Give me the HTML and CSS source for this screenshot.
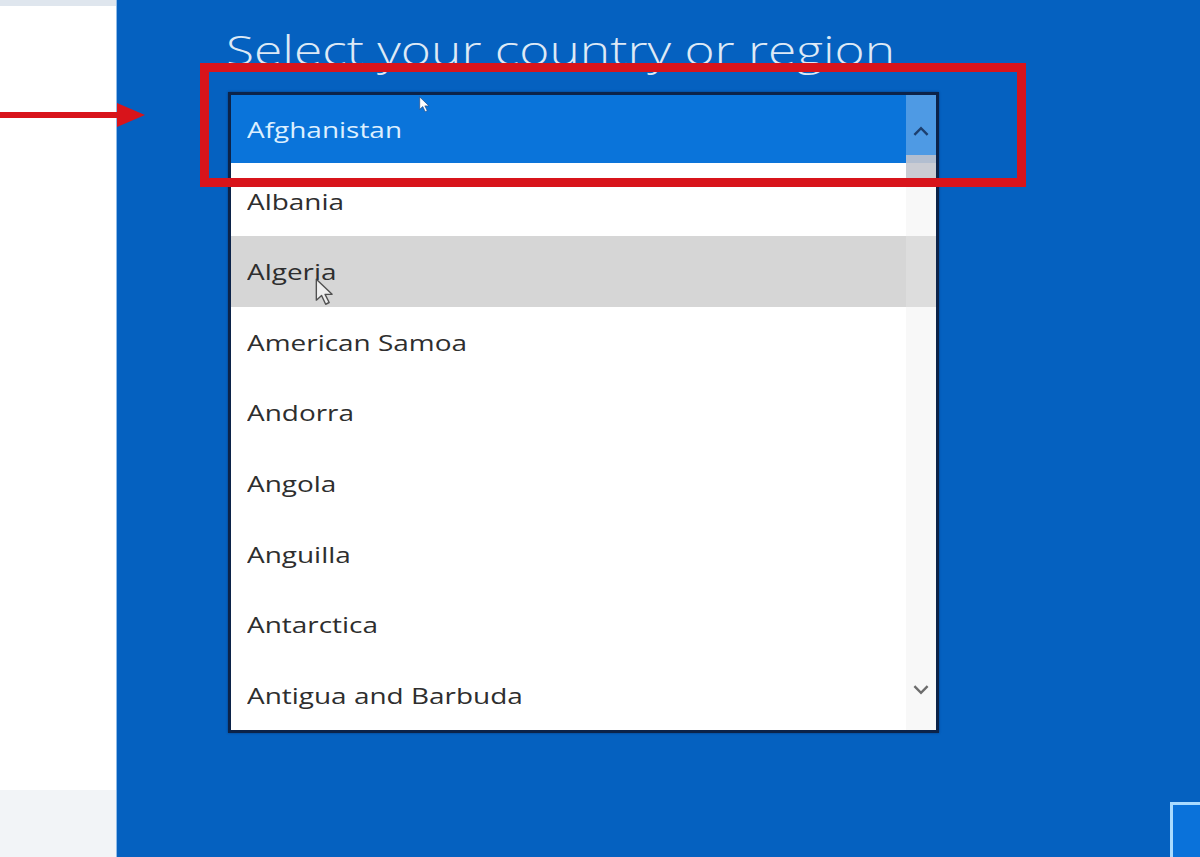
FILE: index.html
```html
<!DOCTYPE html>
<html lang="en">
<head>
<meta charset="utf-8">
<title>Select your country or region</title>
<link rel="stylesheet" href="styles.css">
</head>
<body>
<div class="page">
  <aside class="side">
    <div class="side-top"></div>
    <div class="side-body"></div>
    <div class="side-bottom"></div>
  </aside>
  <main class="main">
    <h1 class="title"><span class="wide wide-title">Select your country or region</span></h1>
    <div class="listbox">
      <ul class="list">
        <li class="item selected"><span class="wide">Afghanistan</span></li>
        <li class="item"><span class="wide">Albania</span></li>
        <li class="item hover"><span class="wide">Algeria</span></li>
        <li class="item"><span class="wide">American Samoa</span></li>
        <li class="item"><span class="wide">Andorra</span></li>
        <li class="item"><span class="wide">Angola</span></li>
        <li class="item"><span class="wide">Anguilla</span></li>
        <li class="item"><span class="wide">Antarctica</span></li>
        <li class="item"><span class="wide">Antigua and Barbuda</span></li>
      </ul>
      <div class="scrollbar">
        <div class="sb-up">
          <svg class="chev" viewBox="0 0 16 10" width="18" height="11"><path d="M2 8 L8 2 L14 8" fill="none" stroke="#1d3f6e" stroke-width="2.2"/></svg>
        </div>
        <div class="sb-thumb"></div>
        <div class="sb-track"></div>
        <div class="sb-down">
          <svg class="chev" viewBox="0 0 16 10" width="18" height="11"><path d="M2 2 L8 8 L14 2" fill="none" stroke="#6d6d6d" stroke-width="2.2"/></svg>
        </div>
      </div>
      <svg class="cursor cursor-b" viewBox="0 0 16 24" width="19" height="28"><path d="M1 1 L1 19 L5.5 15 L9 22.5 L12 21 L8.5 14 L14.5 14 Z" fill="#f4f4f4" stroke="#3a3a3a" stroke-width="1.2" stroke-linejoin="round"/></svg>
    </div>
    <div class="footer">
      <div class="next-btn"></div>
    </div>
  </main>
  <div class="highlight-box"></div>
  <svg class="arrow" viewBox="0 0 146 26" width="146" height="26"><rect x="0" y="10" width="122" height="6" fill="#d8141b"/><path d="M117 1 L145 13 L117 25 Z" fill="#d8141b"/></svg>
  <svg class="cursor cursor-a" viewBox="0 0 16 24" width="11" height="17"><path d="M1 1 L1 19 L5.5 15 L9 22.5 L12 21 L8.5 14 L14.5 14 Z" fill="#ffffff" stroke="#2a4f86" stroke-width="1"/></svg>
</div>
</body>
</html>
```

FILE: styles.css
```css
* { box-sizing: border-box; }
html, body { margin: 0; padding: 0; }
body {
  width: 1200px;
  height: 857px;
  overflow: hidden;
  font-family: "Open Sans", "Noto Sans", "Liberation Sans", sans-serif;
}
.page {
  position: relative;
  display: flex;
  width: 1200px;
  height: 857px;
  overflow: hidden;
}
.side {
  width: 117px;
  flex: none;
  display: flex;
  flex-direction: column;
  border-right: 1px solid #8fbbe8;
  background: #ffffff;
}
.side-top { height: 6px; background: #dfe6ee; }
.side-body { flex: 1; background: #ffffff; }
.side-bottom { height: 67px; background: #f2f4f7; }

.main {
  flex: 1;
  background: #0561c0;
  display: flex;
  flex-direction: column;
  padding-left: 109px;
  overflow: hidden;
}
.wide {
  display: inline-block;
  transform: scaleX(1.27);
  transform-origin: left center;
}
.wide-title { transform: scaleX(1.255); }
.title {
  margin: 0;
  padding-top: 19px;
  height: 92px;
  font-size: 41px;
  line-height: 60px;
  font-weight: 300;
  color: #dde9f6;
  white-space: nowrap;
}
.listbox {
  position: relative;
  width: 711px;
  margin-left: 2px;
  border: 3px solid #0c2349;
  background: #ffffff;
  box-shadow: 0 0 2px rgba(0, 20, 60, 0.5);
}
.list {
  list-style: none;
  margin: 0;
  padding: 0;
}
.item {
  height: 70.6px;
  line-height: 70px;
  padding-left: 16px;
  font-size: 22px;
  color: #2e2e2e;
  white-space: nowrap;
}
.item.selected {
  background: #0a74da;
  color: #dcefff;
  line-height: 68px;
  border-bottom: 3px solid #ffffff;
}
.item.hover { background: #d6d6d6; }

.scrollbar {
  position: absolute;
  top: 0;
  right: 0;
  width: 30px;
  height: 100%;
  display: flex;
  flex-direction: column;
}
.sb-up {
  height: 60px;
  background: rgba(255, 255, 255, 0.28);
  display: flex;
  align-items: center;
  justify-content: center;
  padding-top: 12px;
}
.sb-thumb {
  height: 30px;
  background: rgba(196, 199, 206, 0.9);
}
.sb-track {
  flex: 1;
  background: rgba(235, 235, 235, 0.35);
}
.sb-down {
  height: 72px;
  display: flex;
  align-items: flex-start;
  justify-content: center;
  padding-top: 26px;
  background: rgba(235, 235, 235, 0.35);
}
.chev { display: block; }

.footer {
  margin-top: auto;
  display: flex;
  justify-content: flex-end;
  margin-right: -40px;
}
.next-btn {
  width: 70px;
  height: 70px;
  margin-bottom: -15px;
  background: #0a72da;
  border: 3px solid #a9dbff;
}

.highlight-box {
  position: absolute;
  left: 200px;
  top: 63px;
  width: 826px;
  height: 124px;
  border: 9px solid #d8141b;
}
.arrow {
  position: absolute;
  left: 0;
  top: 102px;
}
.cursor { position: absolute; }
.cursor-a { left: 419px; top: 96px; }
.cursor-b { left: 84px; top: 183px; opacity: 0.85; }
```
